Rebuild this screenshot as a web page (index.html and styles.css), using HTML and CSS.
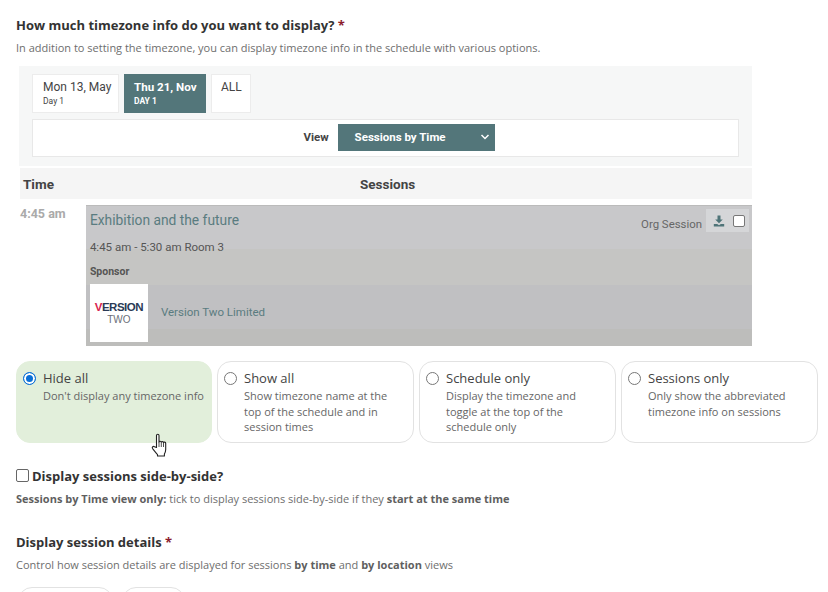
FILE: index.html
```html
<!DOCTYPE html>
<html>

<head>
  <meta charset="utf-8">
  <title>Schedule settings</title>
  <link rel="stylesheet" href="styles.css">
</head>

<body>
  <div class="page">
    <h3 class="field-title">How much timezone info do you want to display? <span class="req">*</span></h3>
    <p class="hint">In addition to setting the timezone, you can display timezone info in the schedule with various options.</p>

    <div class="preview">
      <div class="preview-top">
        <div class="tabs">
          <div class="tab tab-mon">Mon 13, May<small>Day 1</small></div>
          <div class="tab tab-active">Thu 21, Nov<small>DAY 1</small></div>
          <div class="tab tab-all">ALL</div>
        </div>
        <div class="view-bar">
          <span class="view-label">View</span>
          <div class="view-select">
            <span>Sessions by Time</span>
            <svg width="10" height="6" viewBox="0 0 10 6"><path d="M1.5 1l3.500 3.500L8.500 1" fill="none" stroke="#fff" stroke-width="1.500"/></svg>
          </div>
        </div>
      </div>

      <div class="table-head">
        <span class="col-time">Time</span>
        <span>Sessions</span>
      </div>

      <div class="slot">
        <div class="slot-time">4:45 am</div>
        <div class="session">
          <div class="session-top">
            <div class="session-name">Exhibition and the future</div>
            <div class="session-tools">
              <span class="org">Org Session</span>
              <div class="tool-box">
                <svg width="12" height="12" viewBox="0 0 12 12"><path d="M4.500 0.500h3v4h2.300L6 8.300 2.200 4.500h2.300zM0.800 9h3.400l1.800 1.300L7.800 9h3.400v2.500H0.800z" fill="#4f7478"/></svg>
                <span class="tool-check"></span>
              </div>
            </div>
          </div>
          <div class="session-when">4:45 am - 5:30 am Room 3</div>
          <div class="session-label">Sponsor</div>
          <div class="sponsor">
            <div class="logo">
              <div class="logo-top"><span class="logo-v">V</span>ERSION</div>
              <div class="logo-bottom">TWO</div>
            </div>
            <span class="sponsor-name">Version Two Limited</span>
          </div>
        </div>
      </div>
    </div>

    <div class="options">
      <div class="option option-on">
        <span class="radio radio-on"></span>
        <div>
          <div class="option-name">Hide all</div>
          <div class="option-text">Don't display any timezone info</div>
        </div>
      </div>
      <div class="option">
        <span class="radio"></span>
        <div>
          <div class="option-name">Show all</div>
          <div class="option-text">Show timezone name at the top of the schedule and in session times</div>
        </div>
      </div>
      <div class="option">
        <span class="radio"></span>
        <div>
          <div class="option-name">Schedule only</div>
          <div class="option-text">Display the timezone and toggle at the top of the schedule only</div>
        </div>
      </div>
      <div class="option">
        <span class="radio"></span>
        <div>
          <div class="option-name">Sessions only</div>
          <div class="option-text">Only show the abbreviated timezone info on sessions</div>
        </div>
      </div>
    </div>

    <div class="check-row">
      <span class="checkbox"></span>
      <h3 class="field-title">Display sessions side-by-side?</h3>
    </div>
    <p class="hint hint-side"><b>Sessions by Time view only:</b> tick to display sessions side-by-side if they <b>start at the same time</b></p>

    <h3 class="field-title title-details">Display session details <span class="req">*</span></h3>
    <p class="hint">Control how session details are displayed for sessions <b>by time</b> and <b>by location</b> views</p>

    <div class="pills">
      <div class="pill pill-wide"></div>
      <div class="pill pill-small"></div>
    </div>
  </div>

  <svg class="cursor" width="18" height="24" viewBox="0 0 18 24">
    <path d="M5.500 14.500V2.500c0-1.700 2.500-1.700 2.500 0V9c0-1 2.300-1 2.300 0.300 0-1 2.200-1 2.200 0.300 0-0.800 2.200-0.900 2.200 0.600v6.300c0 2-0.500 3-1.300 4.500v2H6.500v-1.500c-1-1.300-4-4.500-5-6-0.800-1.500 0.800-2.700 2-1.700z" fill="#fff" stroke="#222" stroke-width="1.100" stroke-linejoin="round"/>
    <path d="M8 9v5M10.300 9.500v4.500M12.500 10v4" fill="none" stroke="#222" stroke-width="0.800"/>
  </svg>
</body>

</html>
```

FILE: styles.css
```css
html,
body {
  height: 100%;
}

body {
  margin: 0;
  overflow: hidden;
  background-color: #fff;
  font-family: 'Open Sans', sans-serif;
  color: #333;
}

.page {
  padding: 17px 10px 0 16px;
}

.field-title {
  margin: 0;
  font-size: 13px;
  line-height: 17px;
  font-weight: 700;
  color: #333;
}

.req {
  color: #8c1c2c;
}

.hint {
  margin: 6px 0 0;
  font-size: 11px;
  line-height: 16px;
  color: #6e6e6e;
}

.hint b {
  font-weight: 700;
  color: #5f5f5f;
}

/*///////////////////////////////////////////////////////////////////////////*/
.preview {
  width: 733px;
  margin: 10px 0 0 3px;
  font-family: Roboto, sans-serif;
}

.preview-top {
  padding: 8px 13px 9px;
  background-color: #f6f7f7;
}

.tabs {
  display: flex;
  gap: 5px;
}

.tab {
  height: 39px;
  box-sizing: border-box;
  padding: 5px 9px 0;
  background-color: #fff;
  border: 1px solid #ececec;
  font-size: 12px;
  line-height: 15px;
  white-space: nowrap;
  color: #444;
}

.tab small {
  display: block;
  font-size: 8.500px;
  line-height: 13px;
}

.tab-mon {
  width: 87px;
  padding-left: 10px;
}

.tab-active {
  width: 82px;
  background-color: #53767a;
  border-color: #53767a;
  color: #fff;
  font-size: 11.600px;
  font-weight: 700;
}

.tab-all {
  width: 40px;
}

.view-bar {
  display: flex;
  justify-content: center;
  align-items: center;
  gap: 9px;
  height: 38px;
  box-sizing: border-box;
  margin: 6px 0 0;
  padding: 0 0 2px 27px;
  background-color: #fff;
  border: 1px solid #e8e8e8;
}

.view-label {
  font-size: 11.500px;
  font-weight: 700;
  color: #444;
}

.view-select {
  display: flex;
  justify-content: space-between;
  align-items: center;
  width: 157px;
  height: 27px;
  box-sizing: border-box;
  padding: 0 5px 0 17px;
  background-color: #53767a;
  font-size: 11.500px;
  font-weight: 700;
  color: #fff;
}

.table-head {
  display: flex;
  align-items: center;
  height: 31px;
  margin: 2px 0 0 1px;
  padding-left: 3px;
  background-color: #f5f5f5;
  font-size: 13.500px;
  font-weight: 700;
  color: #444;
}

.col-time {
  width: 337px;
}

.slot {
  display: flex;
  margin-top: 6px;
}

.slot-time {
  width: 67px;
  padding: 1px 0 0 1px;
  box-sizing: border-box;
  font-size: 12.500px;
  font-weight: 700;
  color: #aaa;
}

.session {
  width: 667px;
  height: 141px;
  box-sizing: border-box;
  padding: 3px 3px 0 4px;
  background-color: #c5c5c5;
  background-image: linear-gradient(#c8c8ca 43px, #c5c5c3 43px, #c5c5c3 79px, #c0c0c2 79px, #c0c0c2 123px, #bdbdbb 123px);
  border-top: 1px solid #bbb;
}

.session-top {
  display: flex;
  justify-content: space-between;
}

.session-name {
  padding-top: 3px;
  font-size: 13.800px;
  line-height: 16px;
  color: #5a7c80;
}

.session-tools {
  display: flex;
  gap: 4px;
}

.org {
  padding-top: 8px;
  font-size: 11.400px;
  color: #666;
}

.tool-box {
  display: flex;
  align-items: center;
  gap: 8px;
  width: 43px;
  height: 23px;
  box-sizing: border-box;
  padding-left: 7px;
  background-color: #d5d6d8;
}

.tool-check {
  width: 10px;
  height: 10px;
  background-color: #fff;
  border: 1px solid #777;
  border-radius: 2px;
}

.session-when {
  margin-top: 8px;
  font-size: 11.500px;
  line-height: 14px;
  color: #555;
}

.session-label {
  margin-top: 11px;
  font-size: 10.500px;
  line-height: 13px;
  font-weight: 700;
  color: #555;
}

.sponsor {
  display: flex;
  align-items: center;
  gap: 13px;
  margin-top: 6px;
}

.logo {
  display: flex;
  flex-direction: column;
  align-items: center;
  justify-content: center;
  width: 58px;
  height: 58px;
  background-color: #fff;
  font-family: 'Liberation Sans', sans-serif;
}

.logo-top {
  font-size: 11.500px;
  line-height: 13px;
  font-weight: 700;
  letter-spacing: -0.500px;
  color: #2a3a56;
}

.logo-v {
  color: #d8234f;
}

.logo-bottom {
  font-size: 10px;
  line-height: 11px;
  color: #6b6f78;
}

.sponsor-name {
  padding-bottom: 2px;
  font-size: 11.500px;
  color: #5a7c80;
}

/*///////////////////////////////////////////////////////////////////////////*/
.options {
  display: flex;
  gap: 5px;
  margin-top: 15px;
}

.option {
  display: flex;
  gap: 7px;
  width: 197px;
  height: 82px;
  box-sizing: border-box;
  padding: 8px 6px;
  border: 1px solid #e2e2e2;
  border-radius: 14px;
}

.option-on {
  width: 196px;
  background-color: #e2efdb;
  border-color: #e2efdb;
}

.radio {
  flex: none;
  width: 11px;
  height: 11px;
  margin-top: 2px;
  background-color: #fff;
  border: 1px solid #777;
  border-radius: 50%;
}

.radio-on {
  background-color: #0b6fd6;
  border-color: #0b6fd6;
  box-shadow: inset 0 0 0 2px #fff;
}

.option-name {
  font-size: 13px;
  line-height: 17px;
  color: #444;
}

.option-text {
  margin-top: 1px;
  font-size: 11px;
  line-height: 15.500px;
  color: #666;
}

.check-row {
  display: flex;
  align-items: center;
  gap: 3px;
  margin-top: 25px;
}

.checkbox {
  width: 11px;
  height: 11px;
  margin: -2px 0 0 0;
  background-color: #fff;
  border: 1px solid #666;
  border-radius: 2px;
}

.hint-side {
  margin-top: 6px;
}

.title-details {
  margin-top: 27px;
}

.pills {
  display: flex;
  gap: 9px;
  margin: 14px 0 0 2px;
}

.pill {
  height: 30px;
  box-sizing: border-box;
  border: 1px solid #e2e2e2;
  border-radius: 14px;
}

.pill-wide {
  width: 95px;
}

.pill-small {
  width: 63px;
}

/*///////////////////////////////////////////////////////////////////////////*/
.cursor {
  position: absolute;
  left: 151px;
  top: 433px;
}
```
